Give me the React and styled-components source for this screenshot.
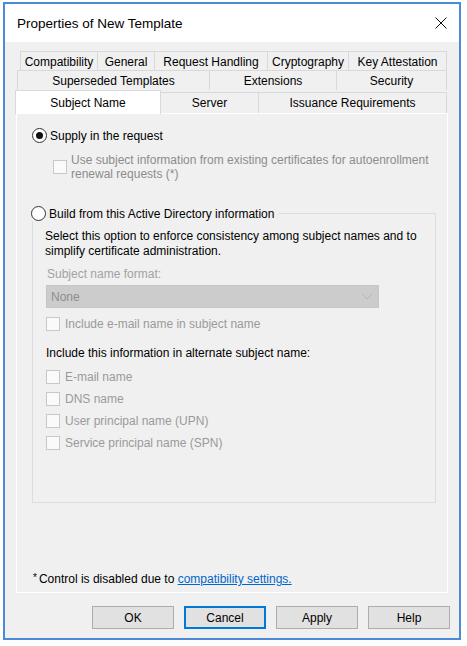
import React from 'react';
import styled, { createGlobalStyle } from 'styled-components';

const GlobalStyle = createGlobalStyle`
  html, body {
    margin: 0;
    padding: 0;
    background: #fff;
  }
  body {
    font-family: "Liberation Sans", Arial, sans-serif;
    font-size: 12px;
    color: #000;
  }
`;

const Window = styled.div`
  margin: 2px 0 0 3px;
  width: 458px;
  box-sizing: border-box;
  border: 2px solid #4a8ad6;
  background: #f0f0f0;
`;

const TitleBar = styled.div`
  height: 38px;
  display: flex;
  align-items: center;
  justify-content: space-between;
  padding: 0 12px;
  background: #fff;
  font-size: 13.5px;
`;

const Body = styled.div`
  padding: 10px 11px 9px 11px;
`;

const TabRow = styled.div`
  display: flex;
  align-items: flex-end;
  height: ${(p) => p.$h}px;
  margin-left: ${(p) => p.$indent}px;
`;

const Tab = styled.div`
  box-sizing: border-box;
  width: ${(p) => p.$w}px;
  height: ${(p) => (p.$active ? 24 : p.$h)}px;
  margin-left: -1px;
  margin-bottom: ${(p) => (p.$active ? -1 : 0)}px;
  border: 1px solid #d9d9d9;
  border-bottom: none;
  background: ${(p) => (p.$active ? '#fff' : '#f0f0f0')};
  display: flex;
  align-items: center;
  justify-content: center;
  white-space: nowrap;
  position: ${(p) => (p.$active ? 'relative' : 'static')};
  z-index: ${(p) => (p.$active ? 1 : 'auto')};
`;

const Panel = styled.div`
  box-sizing: border-box;
  height: 480px;
  border: 1px solid #fff;
  background: #f0f0f0;
  padding: 14px 11px 5px 15px;
  display: flex;
  flex-direction: column;
`;

const OptionRow = styled.div`
  display: flex;
  align-items: center;
  height: 15px;
  gap: 3px;
`;

const Radio = styled.span`
  box-sizing: border-box;
  width: 15px;
  height: 15px;
  border-radius: 50%;
  border: 1px solid #333;
  background: #fff;
  display: inline-flex;
  align-items: center;
  justify-content: center;
  flex-shrink: 0;
  &::after {
    content: '';
    width: 7px;
    height: 7px;
    border-radius: 50%;
    background: ${(p) => (p.$checked ? '#111' : 'transparent')};
  }
`;

const CheckRow = styled.div`
  display: flex;
  align-items: center;
  gap: ${(p) => p.$gap || 5}px;
  margin: ${(p) => p.$mt || 0}px 0 0 ${(p) => p.$ml || 0}px;
  min-height: 14px;
  color: ${(p) => p.$color || '#9a9a9a'};
  line-height: 14px;
  white-space: nowrap;
`;

const Check = styled.span`
  box-sizing: border-box;
  width: 14px;
  height: 14px;
  border: 1px solid #c8c8c8;
  background: #fafafa;
  flex-shrink: 0;
`;

const Group = styled.fieldset`
  margin: 25px 0 0 0;
  padding: 0 12px 52px 12px;
  border: 1px solid #dcdcdc;
  min-width: 0;
`;

const Legend = styled.legend`
  padding: 0 5px 0 0;
  margin-left: -14px;
  display: flex;
  align-items: center;
  gap: 3px;
  height: 15px;
`;

const Text = styled.div`
  margin-top: ${(p) => p.$mt || 0}px;
  padding-left: ${(p) => p.$pl || 0}px;
  color: ${(p) => (p.$dim ? '#a2a2a2' : '#000')};
  line-height: 15px;
  white-space: nowrap;
`;

const Select = styled.div`
  box-sizing: border-box;
  width: 333px;
  height: 23px;
  margin: 3px 0 0 1px;
  padding: 0 6px 0 4px;
  background: #cccccc;
  border: 1px solid #c6c6c6;
  color: #8e8e8e;
  display: flex;
  align-items: center;
  justify-content: space-between;
`;

const Footer = styled.div`
  margin-top: auto;
  padding-left: 1px;
  line-height: 15px;
  white-space: nowrap;
`;

const Star = styled.span`
  font-size: 10px;
  vertical-align: top;
  line-height: 12px;
  margin-right: 2px;
`;

const Link = styled.a`
  color: #0066cc;
  text-decoration: underline;
`;

const ButtonRow = styled.div`
  display: flex;
  justify-content: flex-end;
  gap: 10px;
  margin: 13px -2px 0 0;
`;

const Button = styled.div`
  box-sizing: border-box;
  width: 82px;
  height: 23px;
  background: #e1e1e1;
  border: 1px solid ${(p) => (p.$focus ? '#0078d7' : '#adadad')};
  box-shadow: ${(p) => (p.$focus ? 'inset 0 0 0 1px #0078d7' : 'none')};
  display: flex;
  align-items: center;
  justify-content: center;
`;

const rows = [
  {
    h: 19,
    indent: 5,
    tabs: [
      ['Compatibility', 78],
      ['General', 58],
      ['Request Handling', 114],
      ['Cryptography', 82],
      ['Key Attestation', 99],
    ],
  },
  {
    h: 19,
    indent: 2,
    tabs: [
      ['Superseded Templates', 193],
      ['Extensions', 128],
      ['Security', 111],
    ],
  },
  {
    h: 23,
    indent: 0,
    tabs: [
      ['Subject Name', 146, true],
      ['Server', 99],
      ['Issuance Requirements', 189],
    ],
  },
];

const altNames = [
  'E-mail name',
  'DNS name',
  'User principal name (UPN)',
  'Service principal name (SPN)',
];

export default function App() {
  return (
    <>
      <GlobalStyle />
      <Window>
        <TitleBar>
          <span>Properties of New Template</span>
          <svg width="12" height="12" viewBox="0 0 12 12">
            <path d="M0.5 0.5 L11.5 11.5 M11.5 0.5 L0.5 11.5" stroke="#111" strokeWidth="1" />
          </svg>
        </TitleBar>
        <Body>
          {rows.map((row, i) => (
            <TabRow key={i} $h={row.h} $indent={row.indent}>
              {row.tabs.map(([label, w, active]) => (
                <Tab key={label} $w={w} $h={i === 2 ? 21 : row.h + 1} $active={active}>
                  {label}
                </Tab>
              ))}
            </TabRow>
          ))}
          <Panel>
            <OptionRow>
              <Radio $checked />
              <span>Supply in the request</span>
            </OptionRow>
            <CheckRow $mt={10} $ml={21} $gap={4} $color="#8c8c8c">
              <Check />
              <span>
                Use subject information from existing certificates for autoenrollment
                <br />
                renewal requests (*)
              </span>
            </CheckRow>
            <Group>
              <Legend>
                <Radio />
                <span>Build from this Active Directory information</span>
              </Legend>
              <Text $mt={8}>
                Select this option to enforce consistency among subject names and to
                <br />
                simplify certificate administration.
              </Text>
              <Text $mt={8} $pl={2} $dim>
                Subject name format:
              </Text>
              <Select>
                <span>None</span>
                <svg width="10" height="6" viewBox="0 0 10 6">
                  <path d="M0.5 0.5 L5 5 L9.5 0.5" fill="none" stroke="#b4b4b4" strokeWidth="1" />
                </svg>
              </Select>
              <CheckRow $mt={9} $ml={1}>
                <Check />
                <span>Include e-mail name in subject name</span>
              </CheckRow>
              <Text $mt={15} $pl={1}>
                Include this information in alternate subject name:
              </Text>
              {altNames.map((name, i) => (
                <CheckRow key={name} $mt={i === 0 ? 9 : 8} $ml={1}>
                  <Check />
                  <span>{name}</span>
                </CheckRow>
              ))}
            </Group>
            <Footer>
              <Star>*</Star>
              Control is disabled due to <Link>compatibility settings.</Link>
            </Footer>
          </Panel>
          <ButtonRow>
            <Button>OK</Button>
            <Button $focus>Cancel</Button>
            <Button>Apply</Button>
            <Button>Help</Button>
          </ButtonRow>
        </Body>
      </Window>
    </>
  );
}
